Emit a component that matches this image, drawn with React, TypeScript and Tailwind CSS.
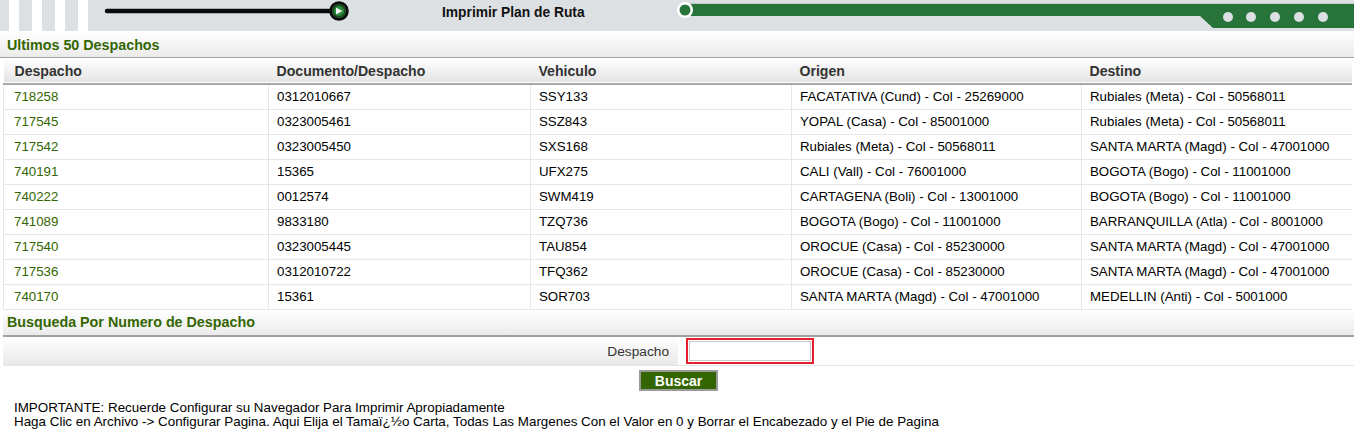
import React from "react";

const rows = [
  ["718258", "0312010667", "SSY133", "FACATATIVA (Cund) - Col - 25269000", "Rubiales (Meta) - Col - 50568011"],
  ["717545", "0323005461", "SSZ843", "YOPAL (Casa) - Col - 85001000", "Rubiales (Meta) - Col - 50568011"],
  ["717542", "0323005450", "SXS168", "Rubiales (Meta) - Col - 50568011", "SANTA MARTA (Magd) - Col - 47001000"],
  ["740191", "15365", "UFX275", "CALI (Vall) - Col - 76001000", "BOGOTA (Bogo) - Col - 11001000"],
  ["740222", "0012574", "SWM419", "CARTAGENA (Boli) - Col - 13001000", "BOGOTA (Bogo) - Col - 11001000"],
  ["741089", "9833180", "TZQ736", "BOGOTA (Bogo) - Col - 11001000", "BARRANQUILLA (Atla) - Col - 8001000"],
  ["717540", "0323005445", "TAU854", "OROCUE (Casa) - Col - 85230000", "SANTA MARTA (Magd) - Col - 47001000"],
  ["717536", "0312010722", "TFQ362", "OROCUE (Casa) - Col - 85230000", "SANTA MARTA (Magd) - Col - 47001000"],
  ["740170", "15361", "SOR703", "SANTA MARTA (Magd) - Col - 47001000", "MEDELLIN (Anti) - Col - 5001000"],
];

function Banner() {
  return (
    <svg className="absolute inset-0" width="1354" height="31" viewBox="0 0 1354 31">
      <rect x="0" y="0" width="1354" height="31" fill="#dde0e3" />
      {[9, 32, 55, 78].map((x) => (
        <rect key={x} x={x} y="0" width="10" height="31" fill="#ffffff" />
      ))}
      <line x1="107" y1="11" x2="332" y2="11" stroke="#0a0a0a" strokeWidth="4.5" strokeLinecap="round" />
      <circle cx="339" cy="11" r="8.5" fill="#1d4d22" stroke="#0a0a0a" strokeWidth="2.5" />
      <circle cx="339" cy="11" r="5" fill="#2c8a3c" />
      <path d="M336 7.5 L342.5 11 L336 14.5 Z" fill="#f2f2f2" />
      <rect x="690" y="3" width="664" height="1.5" fill="#c5c9cc" />
      <path d="M690 4 L1354 4 L1354 28 L1213 28 L1200 16 L690 16 Z" fill="#27733a" />
      <circle cx="685" cy="10" r="8" fill="#ffffff" />
      <circle cx="685" cy="10" r="5.5" fill="#27733a" />
      {[1228, 1251, 1275, 1299, 1323].map((x) => (
        <circle key={x} cx={x} cy="17" r="5" fill="#dde0e3" />
      ))}
    </svg>
  );
}

export default function App() {
  const font = { fontFamily: '"Liberation Sans", Arial, sans-serif' };
  return (
    <div className="w-[1354px] h-[435px] bg-white text-black overflow-hidden" style={font}>
      <div className="relative h-[31px]">
        <Banner />
        <div className="relative flex h-[31px] pl-[442px] pt-[3px] text-[13.8px] font-bold text-[#111]">
          Imprimir Plan de Ruta
        </div>
      </div>

      <div className="h-[27px] flex items-center pt-[4px] px-[7px] bg-gradient-to-b from-white to-[#ebebeb] border-b border-[#a0a0a0] text-[14.3px] font-bold text-[#336600]">
        Ultimos 50 Despachos
      </div>

      <table className="ml-[3px] w-[1348px] border-collapse text-[13.3px] table-fixed">
        <colgroup>
          <col className="w-[265px]" />
          <col className="w-[262px]" />
          <col className="w-[261px]" />
          <col className="w-[290px]" />
          <col className="w-[270px]" />
        </colgroup>
        <thead>
          <tr className="h-[26px] bg-gradient-to-b from-white to-[#e4e4e4] border-b-2 border-[#a8a8a8]">
            {["Despacho", "Documento/Despacho", "Vehiculo", "Origen", "Destino"].map((h, i) => (
              <th key={h} className={`text-left font-bold text-[14.1px] text-[#333] pt-[3px] ${i === 0 ? "pl-[11px]" : "pl-[8px]"}`}>
                {h}
              </th>
            ))}
          </tr>
        </thead>
        <tbody>
          {rows.map((r) => (
            <tr key={r[0]} className="h-[25px] border-b border-[#e6e6e6]">
              {r.map((c, i) => (
                <td
                  key={i}
                  className={`border-l border-[#e6e6e6] ${i === 0 ? "pl-[10px] text-[#336600]" : "pl-[8px] text-black"}`}
                >
                  {c}
                </td>
              ))}
            </tr>
          ))}
        </tbody>
      </table>

      <div className="ml-[3px] h-[27px] flex items-center pt-[2px] px-[4px] bg-gradient-to-b from-white to-[#ebebeb] border-b-2 border-[#a0a0a0] text-[14.3px] font-bold text-[#336600]">
        Busqueda Por Numero de Despacho
      </div>

      <div className="ml-[3px] flex h-[29px] border-b border-[#e6e6e6]">
        <div className="w-[675px] flex items-center justify-end pt-[3px] pr-[9px] bg-gradient-to-b from-white to-[#e9e9e9] text-[13.7px] text-[#333]">
          Despacho
        </div>
        <div className="flex items-center pl-[8px]">
          <div className="w-[128px] h-[26px] border-2 border-[#e3202c] p-[1px] bg-white">
            <div className="w-full h-full border border-[#c8c8c8] bg-white" />
          </div>
        </div>
      </div>

      <div className="flex justify-center pt-[4px] pl-[3px]">
        <button className="w-[79px] h-[21px] bg-[#336600] border-2 border-[#9a9a9a] text-white text-[14px] font-bold leading-none pt-[1px]">
          Buscar
        </button>
      </div>

      <div className="pl-[14px] pt-[10px] text-[13.4px] leading-[14px] text-black">
        <div>IMPORTANTE: Recuerde Configurar su Navegador Para Imprimir Apropiadamente</div>
        <div>
          Haga Clic en Archivo -&gt; Configurar Pagina. Aqui Elija el Tamaï¿½o Carta, Todas Las Margenes Con el Valor en 0 y
          Borrar el Encabezado y el Pie de Pagina
        </div>
      </div>
    </div>
  );
}
